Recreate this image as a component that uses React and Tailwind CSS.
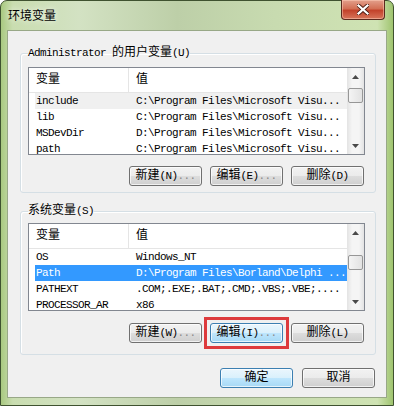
import React from 'react';

// Win7 "环境变量" dialog

const Z = ({ children }) => <span className="text-[12px] tracking-normal">{children}</span>;

const userVars = [
    { name: 'include', value: 'C:\\Program Files\\Microsoft Visu...' },
    { name: 'lib', value: 'C:\\Program Files\\Microsoft Visu...' },
    { name: 'MSDevDir', value: 'D:\\Program Files\\Microsoft Visu...' },
    { name: 'path', value: 'C:\\Program Files\\Microsoft Visu...' },
];

const sysVars = [
    { name: 'OS', value: 'Windows_NT' },
    { name: 'Path', value: 'D:\\Program Files\\Borland\\Delphi ...' },
    { name: 'PATHEXT', value: '.COM;.EXE;.BAT;.CMD;.VBS;.VBE;....' },
    { name: 'PROCESSOR_AR', value: 'x86' },
];

const Arrow = ({ down }) => (
    <svg width="7" height="4" viewBox="0 0 7 4">
        {down ? <path d="M0 0h7L3.5 4z" fill="#4a4a4a" /> : <path d="M0 4h7L3.5 0z" fill="#4a4a4a" />}
    </svg>
);

const ScrollBar = ({ thumbClass }) => (
    <div className="w-[17px] flex flex-col bg-[linear-gradient(90deg,#e3e3e3,#f5f5f5_30%,#f5f5f5_70%,#e3e3e3)]">
        <div className="h-[17px] flex items-center justify-center"><Arrow /></div>
        <div className="flex-1">
            <div className={thumbClass}></div>
        </div>
        <div className="h-[17px] flex items-center justify-center"><Arrow down /></div>
    </div>
);

const VarList = ({ rows, selected, active, thumbClass }) => (
    <div className="h-[88px] border border-[#828790] bg-white flex">
        <div className="flex-1 overflow-hidden">
            <div className="h-[25px] flex items-center border-b border-[#e5e5e5]">
                <div className="w-[100px] h-full pl-[7px] flex items-center border-r border-[#e5e5e5]"><Z>变量</Z></div>
                <div className="pl-[7px]"><Z>值</Z></div>
            </div>
            {rows.map((r, i) => {
                const isSel = i === selected;
                const rowCls = isSel
                    ? (active ? 'bg-[#3399ff] text-white' : 'bg-[#f0f0f0] text-black')
                    : 'text-black';
                return (
                    <div key={i} className={`ml-[6px] h-[16px] leading-[16px] flex whitespace-nowrap ${rowCls}`}>
                        <div className="w-[94px] pl-[1px]">{r.name}</div>
                        <div className="pl-[7px]">{r.value}</div>
                    </div>
                );
            })}
        </div>
        <ScrollBar thumbClass={thumbClass} />
    </div>
);

const Btn = ({ children, hot, marked }) => (
    <button
        className={`relative h-[20px] w-[73px] rounded-[3px] border flex items-center justify-center leading-none shadow-[inset_0_0_0_1px_rgba(255,255,255,0.7)] ${hot
            ? 'border-[#3c7fb1] bg-[linear-gradient(#eaf6fd_0%,#d9f0fc_50%,#bee6fd_51%,#a7d9f5_100%)]'
            : 'border-[#707070] bg-[linear-gradient(#f2f2f2_0%,#ebebeb_50%,#dddddd_51%,#cfcfcf_100%)]'}`}
    >
        {children}
        {marked && <span className="absolute -inset-[7px] border-[3px] border-[#dd3a3c] pointer-events-none"></span>}
    </button>
);

const Dots = () => <span className="text-[#8a8a8a]">...</span>;

export default function App() {
    return (
        <div className="w-[394px] h-[406px] rounded-t-[7px] border border-[#3f5230] bg-[linear-gradient(90deg,#a9c981_0%,#c9ddb0_3%,#d3e2c3_20%,#bdcfa8_45%,#c8dbb0_70%,#cfe3b3_96%,#9fc46f_100%)] flex flex-col px-[6px] pb-[7px] font-['Liberation_Mono','Noto_Sans_CJK_SC',monospace] text-[11px] tracking-[-0.6px] text-black select-none">
            {/* title bar */}
            <div className="h-[29px] flex justify-between">
                <div className="self-center mt-[-2px] ml-[1px] text-[12px] tracking-normal font-['Noto_Sans_CJK_SC',sans-serif] [text-shadow:0_0_6px_#fff]">环境变量</div>
                <div className="mt-[-1px] mr-[2px] w-[44px] h-[20px] rounded-b-[4px] border border-[#5a2a1e] border-t-0 bg-[linear-gradient(#e3a08c_0%,#d37055_45%,#c2432b_55%,#d8755a_100%)] flex items-center justify-center shadow-[inset_0_0_0_1px_rgba(255,210,190,0.5)]">
                    <svg width="12" height="11" viewBox="0 0 12 11">
                        <path d="M1 1l10 9M11 1L1 10" stroke="#4a1a10" strokeWidth="4" strokeLinecap="square" />
                        <path d="M1.5 1.5l9 8M10.5 1.5l-9 8" stroke="#ffffff" strokeWidth="2.2" strokeLinecap="square" />
                    </svg>
                </div>
            </div>

            {/* client */}
            <div className="flex-1 border border-[#98a887] bg-[#f0f0f0] flex flex-col pl-[12px] pr-[10px]">
                <fieldset className="mt-[15px] border border-[#d5dfe5] rounded-[3px] pl-[7px] pr-[10px] pt-[7px] pb-[6px] shadow-[inset_1px_1px_0_#fff]">
                    <legend className="leading-[14px] px-0">Administrator <Z>的用户变量</Z>(U)</legend>
                    <VarList rows={userVars} selected={0} active={false}
                        thumbClass="mt-[3px] mx-auto w-[15px] h-[15px] rounded-[2px] border border-[#979797] bg-[linear-gradient(90deg,#f4f4f4,#e2e2e2)]" />
                    <div className="mt-[11px] flex justify-end gap-[8px] pr-[1px]">
                        <Btn><Z>新建</Z>(N)<Dots /></Btn>
                        <Btn><Z>编辑</Z>(E)<Dots /></Btn>
                        <Btn><Z>删除</Z>(D)</Btn>
                    </div>
                </fieldset>

                <fieldset className="mt-[11px] border border-[#d5dfe5] rounded-[3px] pl-[7px] pr-[10px] pt-[5px] pb-[11px] shadow-[inset_1px_1px_0_#fff]">
                    <legend className="leading-[14px] px-0"><Z>系统变量</Z>(S)</legend>
                    <VarList rows={sysVars} selected={1} active
                        thumbClass="mt-[14px] mx-auto w-[15px] h-[15px] rounded-[2px] border border-[#979797] bg-[linear-gradient(90deg,#f4f4f4,#e2e2e2)]" />
                    <div className="mt-[12px] flex justify-end gap-[8px] pr-[1px]">
                        <Btn><Z>新建</Z>(W)<Dots /></Btn>
                        <Btn hot marked><Z>编辑</Z>(I)<Dots /></Btn>
                        <Btn><Z>删除</Z>(L)</Btn>
                    </div>
                </fieldset>

                <div className="mt-[13px] flex justify-end gap-[9px] pr-[1px]">
                    <Btn hot><Z>确定</Z></Btn>
                    <Btn><Z>取消</Z></Btn>
                </div>
            </div>
        </div>
    );
}
